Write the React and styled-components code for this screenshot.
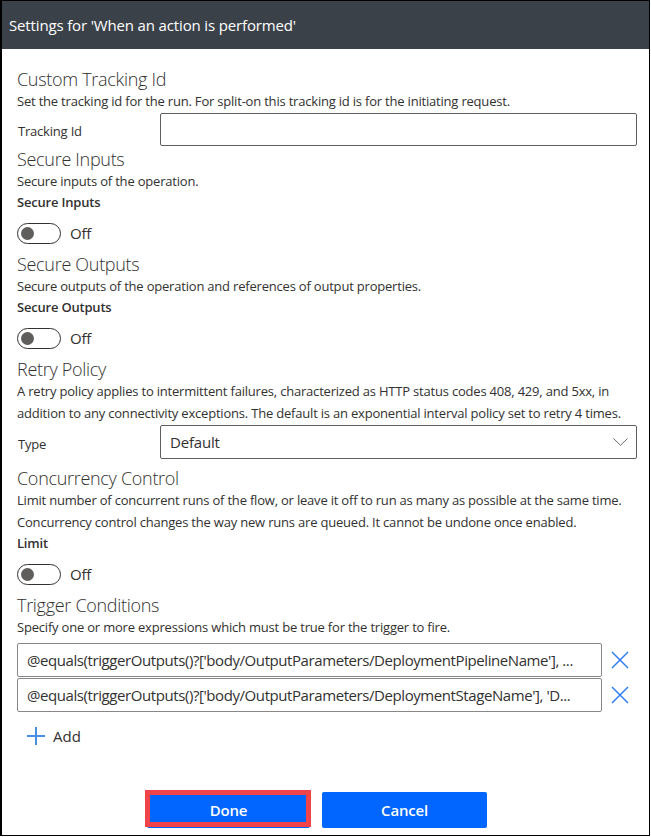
import React from "react";
import styled, { createGlobalStyle } from "styled-components";

const GlobalStyle = createGlobalStyle`
  body {
    margin: 0;
    background: #fff;
    font-family: "Open Sans", "Noto Sans", sans-serif;
    color: #323130;
  }
`;

const Frame = styled.div`
  width: 650px;
  height: 836px;
  box-sizing: border-box;
  border: 1px solid #000;
  border-left-width: 2px;
  display: flex;
  flex-direction: column;
  background: #fff;
`;

const Header = styled.div`
  height: 48px;
  flex-shrink: 0;
  background: #3b4149;
  color: #fff;
  font-size: 15px;
  letter-spacing: -0.15px;
  display: flex;
  align-items: center;
  padding: 0 7px;
`;

const Body = styled.div`
  flex: 1;
  display: flex;
  flex-direction: column;
  padding: 19px 12px 0 15px;
`;

const Heading = styled.div`
  font-size: 18px;
  line-height: 22px;
  font-weight: 300;
  letter-spacing: -0.3px;
  color: #323130;
`;

const Desc = styled.div`
  font-size: 13px;
  line-height: 22px;
  letter-spacing: -0.2px;
`;

const FieldLabel = styled.div`
  font-size: 13px;
  letter-spacing: -0.2px;
  padding-left: 1px;
  padding-top: 3px;
`;

const BoldLabel = styled.div`
  font-size: 13px;
  line-height: 21px;
  font-weight: 600;
  letter-spacing: -0.2px;
`;

const FieldRow = styled.div`
  display: grid;
  grid-template-columns: 143px 1fr;
  align-items: center;
  margin-top: 1px;
  margin-bottom: ${(p) => p.$after}px;
`;

const TextBox = styled.div`
  height: ${(p) => p.$h}px;
  box-sizing: border-box;
  border: 1px solid #605e5c;
  border-radius: 2px;
  display: flex;
  align-items: center;
  justify-content: space-between;
  padding: 0 8px 0 9px;
  font-size: 15px;
  letter-spacing: -0.2px;
`;

const ToggleRow = styled.div`
  height: 40px;
  display: flex;
  align-items: center;
  gap: 9px;
`;

const Track = styled.div`
  width: 44px;
  height: 21px;
  box-sizing: border-box;
  border: 1px solid #323130;
  border-radius: 11px;
  display: flex;
  align-items: center;
  padding-left: 3px;
`;

const Knob = styled.div`
  width: 13px;
  height: 13px;
  border-radius: 50%;
  background: #5f5e5c;
`;

const ToggleText = styled.span`
  font-size: 15px;
  letter-spacing: -0.2px;
`;

const ConditionList = styled.div`
  display: flex;
  flex-direction: column;
  gap: 1px;
  margin-top: 5px;
`;

const ConditionRow = styled.div`
  display: grid;
  grid-template-columns: 1fr 35px;
  align-items: center;
`;

const Expression = styled.div`
  height: 34px;
  box-sizing: border-box;
  border: 1px solid #8a8886;
  border-radius: 2px;
  padding: 0 9px;
  font-size: 15px;
  line-height: 32px;
  letter-spacing: -0.42px;
  white-space: nowrap;
  overflow: hidden;
  text-overflow: ellipsis;
`;

const IconButton = styled.div`
  display: flex;
  justify-content: center;
  align-items: center;
`;

const AddRow = styled.div`
  display: flex;
  align-items: center;
  gap: 8px;
  height: 24px;
  margin-top: 12px;
  padding-left: 10px;
  font-size: 15px;
`;

const Footer = styled.div`
  margin-top: auto;
  display: flex;
  justify-content: center;
  gap: 12px;
  padding: 0 20px 7px 0;
`;

const Button = styled.button`
  position: relative;
  width: ${(p) => p.$w}px;
  height: 36px;
  border: none;
  border-radius: 2px;
  background: #0066ff;
  color: #fff;
  font-family: "Open Sans", sans-serif;
  font-size: 15px;
  font-weight: 600;
  letter-spacing: -0.2px;

  ${(p) =>
    p.$highlight &&
    `
    &::after {
      content: "";
      position: absolute;
      left: -2px;
      right: -1px;
      top: -2px;
      bottom: 1px;
      border: 5px solid #f0434a;
    }
  `}
`;

const Toggle = () => (
  <ToggleRow>
    <Track>
      <Knob />
    </Track>
    <ToggleText>Off</ToggleText>
  </ToggleRow>
);

const CloseIcon = () => (
  <svg width="18" height="18" viewBox="0 0 18 18">
    <path d="M1 1 L17 17 M17 1 L1 17" stroke="#2f7cf0" strokeWidth="1.5" fill="none" />
  </svg>
);

const PlusIcon = () => (
  <svg width="18" height="18" viewBox="0 0 18 18">
    <path d="M9 0 V18 M0 9 H18" stroke="#4a8fe6" strokeWidth="2" fill="none" />
  </svg>
);

const Chevron = () => (
  <svg width="15" height="8" viewBox="0 0 15 8">
    <path d="M0.5 0.5 L7.5 7.3 L14.5 0.5" stroke="#6b6b6b" strokeWidth="1" fill="none" />
  </svg>
);

const conditions = [
  "@equals(triggerOutputs()?['body/OutputParameters/DeploymentPipelineName'], ...",
  "@equals(triggerOutputs()?['body/OutputParameters/DeploymentStageName'], 'D...",
];

export default function App() {
  return (
    <>
      <GlobalStyle />
      <Frame>
        <Header>Settings for 'When an action is performed'</Header>
        <Body>
          <Heading>Custom Tracking Id</Heading>
          <Desc>Set the tracking id for the run. For split-on this tracking id is for the initiating request.</Desc>
          <FieldRow $after={2}>
            <FieldLabel>Tracking Id</FieldLabel>
            <TextBox $h={33} />
          </FieldRow>

          <Heading>Secure Inputs</Heading>
          <Desc>Secure inputs of the operation.</Desc>
          <BoldLabel>Secure Inputs</BoldLabel>
          <Toggle />

          <Heading>Secure Outputs</Heading>
          <Desc>Secure outputs of the operation and references of output properties.</Desc>
          <BoldLabel>Secure Outputs</BoldLabel>
          <Toggle />

          <Heading>Retry Policy</Heading>
          <Desc>
            A retry policy applies to intermittent failures, characterized as HTTP status codes 408, 429, and 5xx, in
            <br />
            addition to any connectivity exceptions. The default is an exponential interval policy set to retry 4 times.
          </Desc>
          <FieldRow $after={8}>
            <FieldLabel>Type</FieldLabel>
            <TextBox $h={34}>
              Default
              <Chevron />
            </TextBox>
          </FieldRow>

          <Heading>Concurrency Control</Heading>
          <Desc>Limit number of concurrent runs of the flow, or leave it off to run as many as possible at the same time.</Desc>
          <Desc>Concurrency control changes the way new runs are queued. It cannot be undone once enabled.</Desc>
          <BoldLabel>Limit</BoldLabel>
          <Toggle />

          <Heading>Trigger Conditions</Heading>
          <Desc>Specify one or more expressions which must be true for the trigger to fire.</Desc>
          <ConditionList>
            {conditions.map((c) => (
              <ConditionRow key={c}>
                <Expression>{c}</Expression>
                <IconButton>
                  <CloseIcon />
                </IconButton>
              </ConditionRow>
            ))}
          </ConditionList>
          <AddRow>
            <PlusIcon />
            Add
          </AddRow>

          <Footer>
            <Button $w={163} $highlight>
              Done
            </Button>
            <Button $w={165}>Cancel</Button>
          </Footer>
        </Body>
      </Frame>
    </>
  );
}
